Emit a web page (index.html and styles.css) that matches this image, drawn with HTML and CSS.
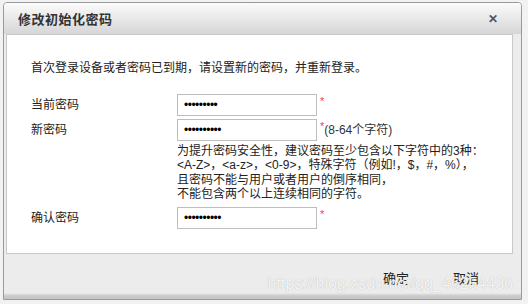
FILE: index.html
```html
<!DOCTYPE html>
<html lang="zh-CN">
<head>
    <meta charset="UTF-8">
    <title>修改初始化密码</title>
    <link rel="stylesheet" href="styles.css">
</head>
<body>
    <div class="dialog">
        <div class="head">
            <span class="title">修改初始化密码</span>
            <span class="close">&#x2715;</span>
        </div>
        <div class="content">
            <p class="intro">首次登录设备或者密码已到期，请设置新的密码，并重新登录。</p>
            <div class="row">
                <label class="label">当前密码</label>
                <input class="pwd" type="password" value="123456789">
                <span class="star">*</span>
            </div>
            <div class="row">
                <label class="label">新密码</label>
                <input class="pwd" type="password" value="1234567890">
                <span class="star">*</span><span class="tip">(8-64个字符)</span>
            </div>
            <div class="hint">
                为提升密码安全性，建议密码至少包含以下字符中的3种：<br>
                &lt;A-Z&gt;，&lt;a-z&gt;，&lt;0-9&gt;，特殊字符（例如!，$，#，%），<br>
                且密码不能与用户或者用户的倒序相同，<br>
                不能包含两个以上连续相同的字符。
            </div>
            <div class="row">
                <label class="label">确认密码</label>
                <input class="pwd" type="password" value="1234567890">
                <span class="star">*</span>
            </div>
        </div>
        <div class="foot">
            <button class="btn">确定</button>
            <button class="btn">取消</button>
            <span class="mark">https://blog.csdn.net/qq_46254436</span>
        </div>
    </div>
</body>
</html>
```

FILE: styles.css
```css
body{
    margin: 0;
    background-color: #f2f2f2;
    font-family: "Liberation Sans", "Noto Sans CJK SC", sans-serif;
    font-size: 12px;
    color: #222;
}
.dialog{
    position: relative;
    width: 517px;
    height: 296px;
    margin: 2px 0 0 3px;
    border: 1px solid #9a9a9a;
    border-radius: 4px 4px 0 0;
    background: linear-gradient(#ececec 0, #ececec 290px, #c8c8c8 293px, #c8c8c8 296px);
    overflow: hidden;
}
.head{
    height: 31px;
    display: flex;
    align-items: center;
    justify-content: space-between;
    padding: 0 23px 0 14px;
    background: linear-gradient(#fbfbfb, #d6d6d6);
}
.title{
    font-size: 13px;
    font-weight: bold;
    color: #333;
    letter-spacing: 0.5px;
}
.close{
    font-size: 12px;
    font-weight: bold;
    color: #555;
}
.content{
    height: 218px;
    margin: 0 8px 0 2px;
    padding: 0 24px;
    background-color: #fff;
    border: 1px solid #c8c8c8;
}
.intro{
    margin: 26px 0 19px;
    line-height: 14px;
}
.row{
    display: flex;
    align-items: center;
    height: 22px;
    margin-bottom: 3px;
}
.label{
    width: 146px;
    margin-top: -3px;
}
.pwd{
    box-sizing: border-box;
    width: 140px;
    height: 22px;
    margin: 0;
    padding: 0 6px;
    border: 1px solid #bdbdbd;
    font-family: "Liberation Sans", sans-serif;
    font-size: 12px;
    letter-spacing: -0.5px;
}
.star{
    align-self: flex-start;
    margin: 1px 0 0 3px;
    color: #ff3860;
    font-size: 11px;
}
.tip{
    margin-top: -3px;
    color: #333;
}
.hint{
    margin: 0 0 6px 146px;
    line-height: 14.3px;
    color: #222;
}
.foot{
    display: flex;
    justify-content: flex-end;
    gap: 44px;
    padding: 14px 42px 0 0;
}
.btn{
    border: none;
    background: none;
    padding: 0;
    font-family: "Liberation Sans", "Noto Sans CJK SC", sans-serif;
    font-size: 13px;
    color: #222;
}
.mark{
    position: absolute;
    right: 8px;
    bottom: 6px;
    font-family: "Liberation Sans", sans-serif;
    font-size: 16px;
    color: rgba(255, 255, 255, 0.85);
    text-shadow: 0 0 1px #b0b0b0;
}
```
